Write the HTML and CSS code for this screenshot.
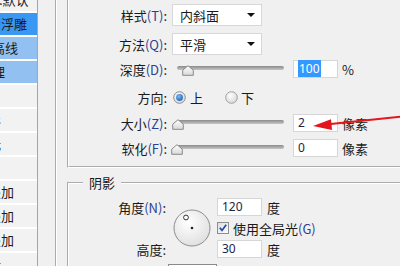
FILE: index.html
```html
<!DOCTYPE html>
<html lang="zh-CN">
<head>
  <meta charset="UTF-8">
  <title>图层样式 - 斜面和浮雕</title>
  <link rel="stylesheet" href="styles.css">
</head>
<body>

  <div class="dialog">
    <ul class="style-list">
      <li class="first">混合选项:默认</li>
      <li class="selected">斜面和浮雕</li>
      <li class="sub active">等高线</li>
      <li class="sub active">纹理</li>
      <li>描边</li>
      <li>内阴影</li>
      <li>内发光</li>
      <li>光泽</li>
      <li>颜色叠加</li>
      <li>渐变叠加</li>
      <li>图案叠加</li>
      <li>外发光</li>
    </ul>

    <div class="panel">
      <div class="group">

        <div class="structure">
          <div class="row">
            <span class="label">样式<span class="key">(T)</span>:</span>
            <div class="select">内斜面<span class="caret"></span></div>
          </div>
          <div class="row method-row">
            <span class="label">方法<span class="key">(Q)</span>:</span>
            <div class="select">平滑<span class="caret"></span></div>
          </div>
          <div class="row depth-row">
            <span class="label">深度<span class="key">(D)</span>:</span>
            <div class="slider">
              <div class="track"></div>
              <svg class="thumb" style="left: 10px" width="12" height="11" viewBox="0 0 12 11"><use href="#thumb-shape"/></svg>
            </div>
            <div class="field"><span class="picked">100</span></div>
            <span class="unit">%</span>
          </div>
          <div class="row direction-row">
            <span class="label">方向:</span>
            <div class="radios">
              <svg class="radio" width="13" height="13" viewBox="0 0 13 13">
                <circle cx="6.5" cy="6.5" r="5.8" fill="url(#radio-bg)" stroke="#8c8c8c"/>
                <circle cx="6.5" cy="6.5" r="3.4" fill="url(#radio-dot)"/>
              </svg>
              <span class="radio-text">上</span>
              <svg class="radio off" width="13" height="13" viewBox="0 0 13 13">
                <circle cx="6.5" cy="6.5" r="5.8" fill="url(#radio-bg)" stroke="#a0a0a0"/>
              </svg>
              <span class="radio-text">下</span>
            </div>
          </div>
          <div class="row">
            <span class="label">大小<span class="key">(Z)</span>:</span>
            <div class="slider">
              <div class="track"></div>
              <svg class="thumb" style="left: 0px" width="12" height="11" viewBox="0 0 12 11"><use href="#thumb-shape"/></svg>
            </div>
            <div class="field">2</div>
            <span class="unit">像素</span>
          </div>
          <div class="row soften-row">
            <span class="label">软化<span class="key">(F)</span>:</span>
            <div class="slider">
              <div class="track"></div>
              <svg class="thumb" style="left: -1px" width="12" height="11" viewBox="0 0 12 11"><use href="#thumb-shape"/></svg>
            </div>
            <div class="field">0</div>
            <span class="unit">像素</span>
          </div>
        </div>

        <fieldset class="shadow">
          <legend>阴影</legend>
          <div class="shadow-grid">
            <span class="label angle-label">角度<span class="key">(N)</span>:</span>
            <svg class="dial" width="38" height="38" viewBox="0 0 38 38">
              <circle cx="19" cy="19" r="18" fill="url(#dial-bg)" stroke="#8e8e8e"/>
              <circle cx="13" cy="8.5" r="2.4" fill="#fff" stroke="#333" stroke-width="1"/>
              <circle cx="19" cy="19" r="1.3" fill="#222"/>
            </svg>
            <div class="field angle-field">120</div>
            <span class="unit angle-unit">度</span>

            <div class="check-row">
              <svg class="checkbox" width="12" height="12" viewBox="0 0 12 12">
                <rect x="0.5" y="0.5" width="11" height="11" fill="url(#check-bg)" stroke="#8e8f8f"/>
                <path d="M2.8 5.8 L5 8.4 L9.2 2.8" fill="none" stroke="#2347a8" stroke-width="1.7"/>
              </svg>
              <span>使用全局光<span class="key">(G)</span></span>
            </div>

            <span class="label height-label">高度:</span>
            <div class="field height-field">30</div>
            <span class="unit height-unit">度</span>

            <div class="contour"></div>
          </div>
        </fieldset>

      </div>
    </div>
  </div>

  <svg class="arrow" width="400" height="266" viewBox="0 0 400 266">
    <line x1="402" y1="116.5" x2="326" y2="124.6" stroke="#e4161c" stroke-width="2"/>
    <polygon points="313,126 331,119.2 332,130" fill="#e4161c"/>
  </svg>

  <svg class="defs" width="0" height="0">
    <defs>
      <linearGradient id="thumb-bg" x1="0" y1="0" x2="0" y2="1">
        <stop offset="0" stop-color="#ffffff"/>
        <stop offset="1" stop-color="#d8d8d8"/>
      </linearGradient>
      <radialGradient id="radio-bg" cx="0.4" cy="0.35" r="0.7">
        <stop offset="0" stop-color="#ffffff"/>
        <stop offset="1" stop-color="#d6d6d6"/>
      </radialGradient>
      <radialGradient id="radio-dot" cx="0.4" cy="0.35" r="0.7">
        <stop offset="0" stop-color="#7cc0f4"/>
        <stop offset="1" stop-color="#1562be"/>
      </radialGradient>
      <radialGradient id="dial-bg" cx="0.4" cy="0.35" r="0.75">
        <stop offset="0" stop-color="#ffffff"/>
        <stop offset="1" stop-color="#dcdcdc"/>
      </radialGradient>
      <linearGradient id="check-bg" x1="0" y1="0" x2="1" y2="1">
        <stop offset="0" stop-color="#dcdcdc"/>
        <stop offset="1" stop-color="#ffffff"/>
      </linearGradient>
      <path id="thumb-shape" d="M6 0.7 L11.3 5.2 L11.3 10.3 L0.7 10.3 L0.7 5.2 Z" fill="url(#thumb-bg)" stroke="#8a8a8a"/>
    </defs>
  </svg>

</body>
</html>
```

FILE: styles.css
```css
body {
  margin: 0;
  width: 400px;
  height: 266px;
  overflow: hidden;
  position: relative;
  background: #f0f0f0;
  font-family: "Noto Sans CJK SC", "Noto Sans", sans-serif;
  font-size: 13px;
  color: #1a1a1a;
}

.dialog {
  display: flex;
  align-items: flex-start;
  width: 500px;
}

/* left list of effects, scrolled so only the tail of each name shows */
.style-list {
  list-style: none;
  margin: -11px 0 0;
  padding: 0;
  width: 37px;
  height: 300px;
  flex-shrink: 0;
  overflow: hidden;
  background: #f2f2f2;
  border-right: 1px solid #a6a6a6;
}

.style-list li {
  height: 22px;
  line-height: 22px;
  border-bottom: 2px solid #fff;
  text-indent: -38px;
  white-space: nowrap;
}

.style-list .first {
  text-indent: -53px;
}

.style-list .sub {
  text-indent: -21px;
}

.style-list .selected {
  background: #3a98f2;
}

.style-list .active {
  background: #92c1f1;
}

.panel {
  margin-left: 17px;
  width: 440px;
  flex-shrink: 0;
}

.group {
  margin-top: -20px;
  height: 320px;
  border: 2px groove #fff;
  padding: 10px 0 0 10px;
}

.structure {
  border: 2px groove #fff;
  padding: 10px 0 9px;
}

.row {
  display: flex;
  align-items: center;
  height: 18px;
  margin-top: 8px;
}

.row:first-child {
  margin-top: 0;
}

.row:first-child,
.method-row {
  height: 22px;
}

.method-row { margin-top: 7px; }
.depth-row { margin-top: 5px; }
.direction-row { margin-top: 10px; }
.soften-row { margin-top: 7px; }

.label {
  width: 98px;
  margin-right: 5px;
  text-align: right;
  white-space: nowrap;
}

.key {
  color: #2e3f92;
}

.select {
  display: flex;
  align-items: center;
  width: 90px;
  height: 22px;
  box-sizing: border-box;
  padding-left: 7px;
  background: #fff;
  border: 1px solid #d8d8d8;
}

.caret {
  margin-left: auto;
  margin-right: 6px;
  border-left: 4px solid transparent;
  border-right: 4px solid transparent;
  border-top: 4px solid #111;
}

.slider {
  position: relative;
  width: 115px;
  height: 18px;
  margin-right: 6px;
}

.track {
  margin: 6px 0 0 5px;
  width: 107px;
  height: 4px;
  border-radius: 2px;
  background: linear-gradient(#8a8a8a, #c6c6c6);
}

.thumb {
  position: absolute;
  top: 5px;
}

.field {
  width: 45px;
  height: 18px;
  box-sizing: border-box;
  padding-left: 4px;
  background: #fff;
  border: 1px solid #d6d6d6;
  font-family: "Noto Sans", sans-serif;
  font-size: 12px;
  line-height: 16px;
  color: #1f2444;
}

.picked {
  background: #3399ff;
  color: #fff;
  padding: 0 1px;
}

.unit {
  margin-left: 4px;
  white-space: nowrap;
}

.radios {
  display: flex;
  align-items: center;
  margin-left: 1px;
}

.radio-text {
  margin-left: 4px;
}

.radio.off {
  margin-left: 22px;
}

.radio-text:last-child {
  margin-left: 3px;
}

/* shadow group */
.shadow {
  margin: 6px 0 0;
  padding: 7px 0 0;
  border: 2px groove #fff;
  min-inline-size: 0;
}

.shadow legend {
  margin-left: 14px;
  padding: 0 6px;
  line-height: 17px;
}

.shadow-grid {
  display: grid;
  grid-template-columns: 97px 51px 50px auto;
  grid-template-rows: 18px 12px 18px 20px;
  row-gap: 6px;
  align-items: center;
}

.shadow-grid .label {
  width: auto;
  margin-right: 0;
}

.angle-label { grid-column: 1; grid-row: 1; }
.height-label { grid-column: 1; grid-row: 3; }

.dial {
  grid-column: 2;
  grid-row: 1 / 4;
  justify-self: center;
}

.angle-field { grid-column: 3; grid-row: 1; }
.height-field { grid-column: 3; grid-row: 3; }
.angle-unit { grid-column: 4; grid-row: 1; margin-left: 0; }
.height-unit { grid-column: 4; grid-row: 3; margin-left: 0; }

.check-row {
  grid-column: 3 / 5;
  grid-row: 2;
  display: flex;
  align-items: center;
  gap: 4px;
  white-space: nowrap;
}

.contour {
  grid-column: 2;
  grid-row: 4;
  justify-self: end;
  align-self: stretch;
  width: 47px;
  background: #fff;
  border: 1px solid #8a8a8a;
}

.arrow {
  position: absolute;
  left: 0;
  top: 0;
  pointer-events: none;
}

.defs {
  position: absolute;
}
```
